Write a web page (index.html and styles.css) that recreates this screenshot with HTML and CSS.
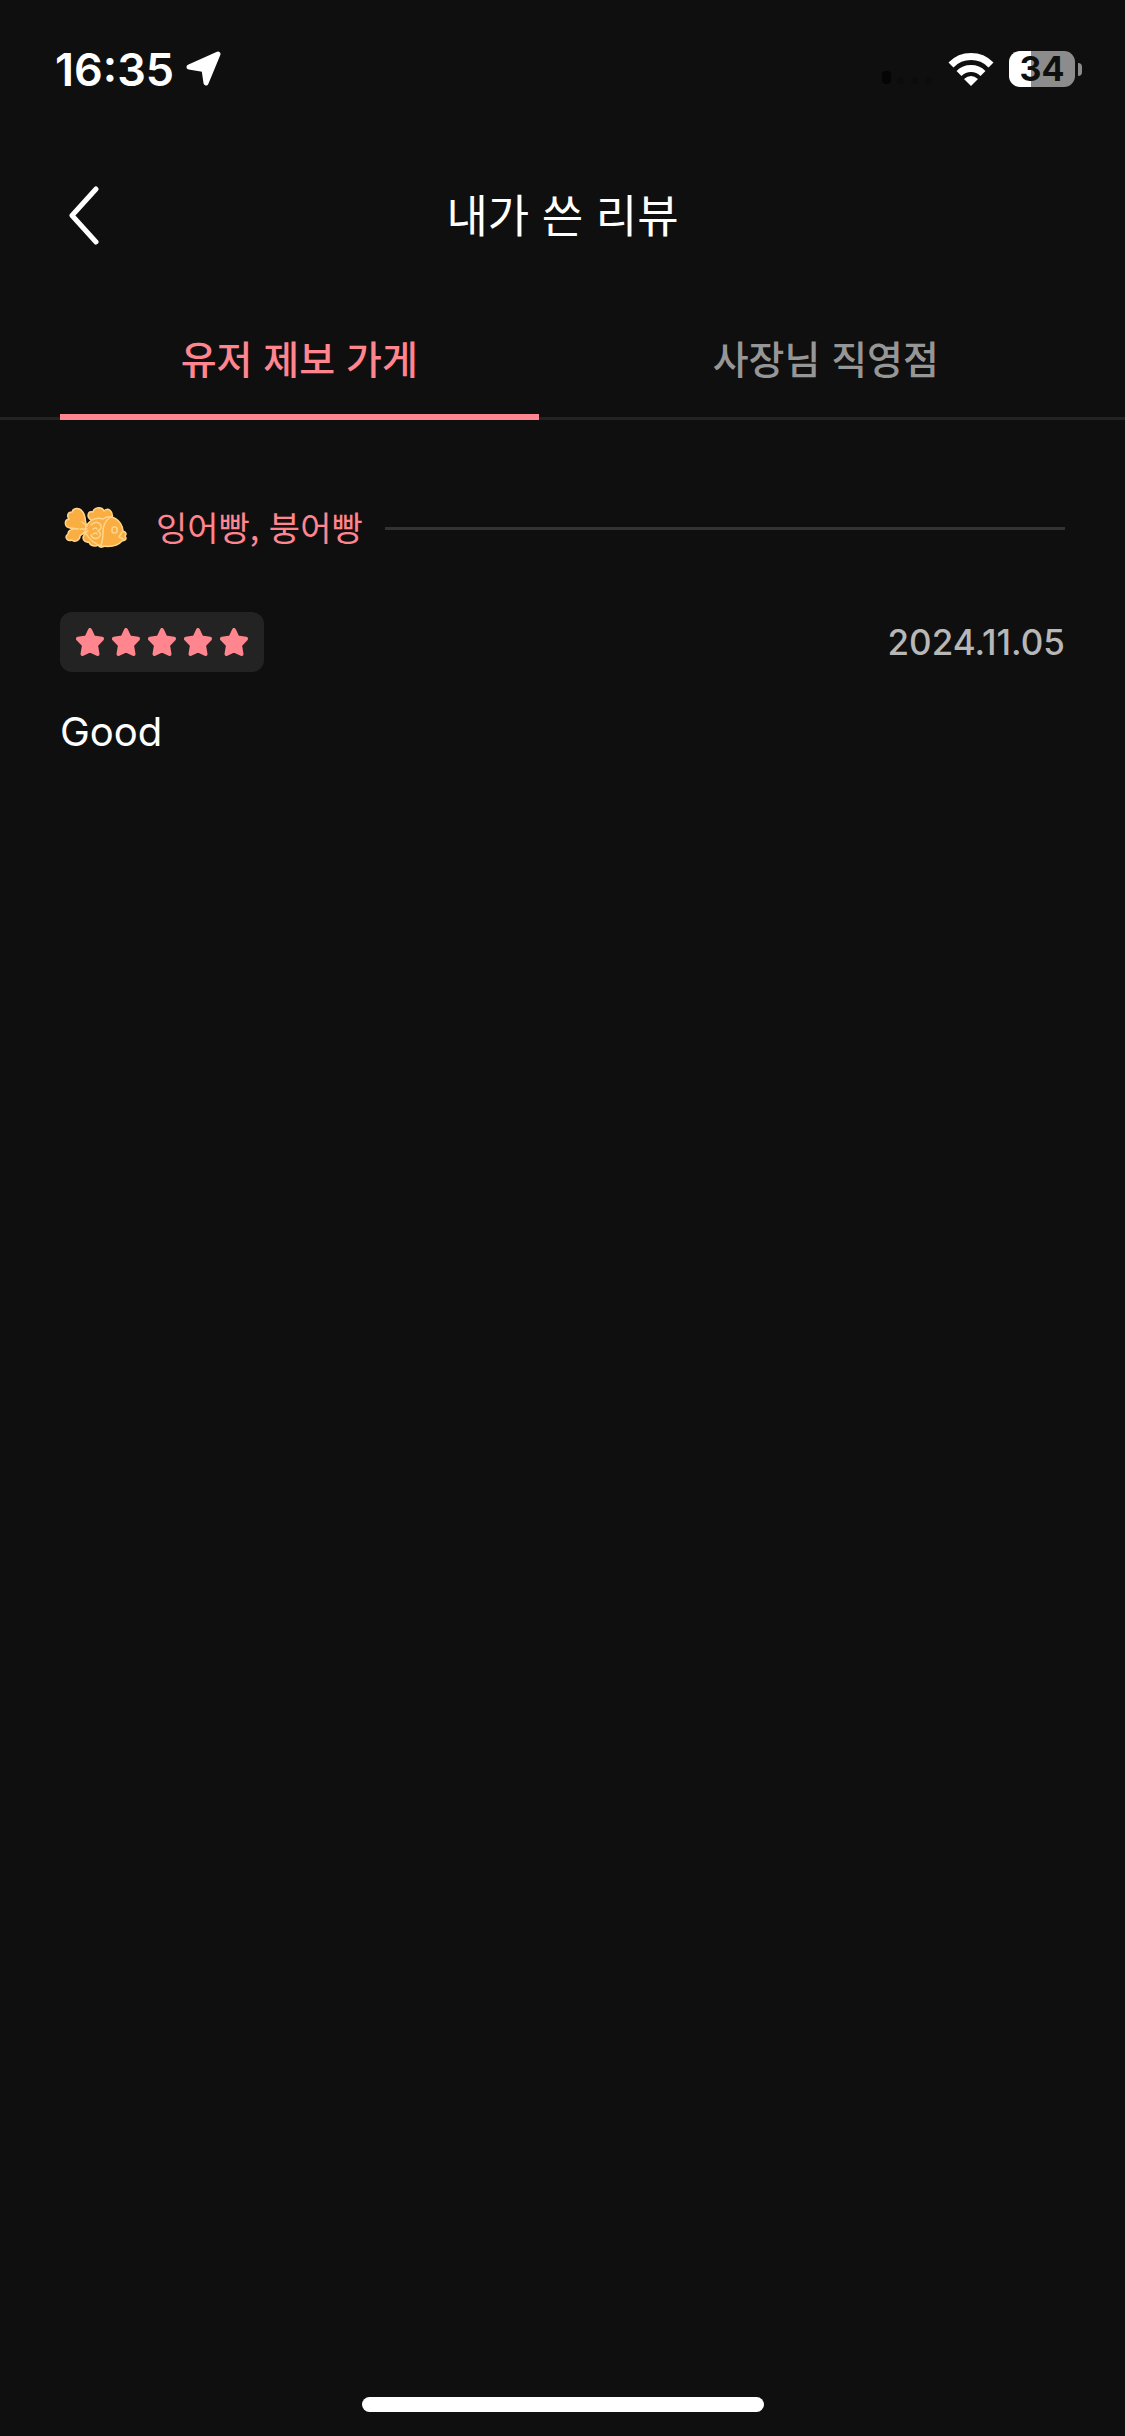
FILE: index.html
```html
<!DOCTYPE html>
<html lang="ko">
<head>
    <meta charset="UTF-8">
    <meta name="viewport" content="width=device-width, initial-scale=1.0">
    <title>내가 쓴 리뷰</title>
    <link rel="stylesheet" href="styles.css">
</head>
<body>
    <div class="status-bar">
        <div class="status-left">
            <span class="time">16:35</span>
            <svg class="location-icon" viewBox="0 0 36 36" aria-hidden="true">
                <path d="M32 3 20 32 18 18.500 3 16Z" fill="#fff" stroke="#fff" stroke-width="5" stroke-linejoin="round"/>
            </svg>
        </div>
        <div class="status-right">
            <svg class="signal-icon" viewBox="0 0 54 14" aria-hidden="true">
                <rect x="0" y="0" width="9" height="13" rx="4"/>
                <rect x="15" y="6" width="7" height="7" rx="3" opacity=".3"/>
                <rect x="29" y="6" width="7" height="7" rx="3" opacity=".3"/>
                <rect x="43" y="6" width="7" height="7" rx="3" opacity=".3"/>
            </svg>
            <svg class="wifi-icon" viewBox="0 0 46 34" aria-hidden="true">
                <g fill="none" stroke="#fff">
                    <path d="M3 13A28 28 0 0 1 43 13" stroke-width="7"/>
                    <path d="M11 21.500A17 17 0 0 1 35 21.500" stroke-width="7"/>
                </g>
                <path d="M23 34 16 27Q23 21 30 27Z" fill="#fff"/>
            </svg>
            <div class="battery">
                <span class="battery-level">34</span>
                <span class="battery-cap"></span>
            </div>
        </div>
    </div>

    <header class="nav-bar">
        <button type="button" class="back-button" aria-label="뒤로">
            <svg viewBox="0 0 36 60" aria-hidden="true">
                <path d="M30 3 6 29.500 30 56" fill="none" stroke="#fff" stroke-width="5" stroke-linecap="round" stroke-linejoin="round"/>
            </svg>
        </button>
        <h1>내가 쓴 리뷰</h1>
    </header>

    <nav class="tabs" role="tablist">
        <button type="button" class="tab active" role="tab" aria-selected="true">유저 제보 가게</button>
        <button type="button" class="tab" role="tab" aria-selected="false">사장님 직영점</button>
    </nav>

    <main class="reviews">
        <article class="review">
            <div class="category">
                <svg class="category-icon" viewBox="0 0 72 72" aria-hidden="true">
                    <g fill="#faae42" stroke="#ffd58c" stroke-width="1.500" stroke-linejoin="round" stroke-linecap="round">
                        <!-- fins -->
                        <path d="M31 28C26 25 28 18 33 20 34 15 42 14 44 19 48 15 54 19 52 27L45 31Z"/>
                        <path d="M25 42C21 46 24 51 29 50 30 54 36 55 38 53 40 57 46 55 47 50L44 44Z"/>
                        <!-- tail -->
                        <path d="M27 33C24 31 27 24 22 19 19 15 13 16 12 20 7 20 7 25 9 27 4 28 4 35 10 36 13 37 16 36 18 37 13 36 8 38 8 42 4 45 7 50 12 48 15 51 20 48 20 44 22 42 24 41 27 38Z"/>
                        <!-- body -->
                        <path d="M26 34C31 27 37 25 43 27 51 21 62 28 63 39Q68 41 65 44 68 48 62 49C57 55 49 55 42 54 34 52 29 47 25 40Z"/>
                    </g>
                    <g fill="none" stroke="#ffd58c" stroke-width="1.500" stroke-linecap="round" stroke-linejoin="round">
                        <path d="M50 25Q43 31 43 40 43 48 41 53M22 30 27 34M20 37 27 37M23 42 28 39"/>
                        <path d="M31 33Q36 28 40 32 43 36 38 39 43 42 38 46 33 48 31 43M33 37Q36 35 37 37M33 42Q36 40 37 42"/>
                        <rect x="52" y="35" width="5" height="6" rx="2"/>
                        <path d="M62 40 59 45 63 47"/>
                    </g>
                </svg>
                <h2>잉어빵, 붕어빵</h2>
                <hr>
            </div>
            <div class="review-meta">
                <div class="rating" role="img" aria-label="별점 5점">
                    <svg class="star" viewBox="0 0 28 28"><use href="#star"/></svg>
                    <svg class="star" viewBox="0 0 28 28"><use href="#star"/></svg>
                    <svg class="star" viewBox="0 0 28 28"><use href="#star"/></svg>
                    <svg class="star" viewBox="0 0 28 28"><use href="#star"/></svg>
                    <svg class="star" viewBox="0 0 28 28"><use href="#star"/></svg>
                </div>
                <time datetime="2024-11-05">2024.11.05</time>
            </div>
            <p class="review-text">Good</p>
        </article>
    </main>

    <div class="home-indicator"></div>

    <svg class="sprite" aria-hidden="true">
        <symbol id="star" viewBox="0 0 28 28">
            <path d="M14 2 17.500 9.500 26 10.800 20 17 21.500 26 14 22.500 6.500 26 8 17 2 10.800 10.500 9.500Z" fill="#ff858f" stroke="#ff858f" stroke-width="4" stroke-linejoin="round"/>
        </symbol>
    </svg>
</body>
</html>
```

FILE: styles.css
```css
* {
    box-sizing: border-box;
}
body {
    margin: 0;
    min-height: 100vh;
    display: flex;
    flex-direction: column;
    background: #0f0f0f;
    color: #fff;
    font-family: 'Inter', 'Noto Sans CJK KR', sans-serif;
}
button {
    padding: 0;
    border: none;
    background: none;
    cursor: pointer;
}
svg {
    display: block;
}

/* Status bar */
.status-bar {
    display: flex;
    justify-content: space-between;
    align-items: center;
    height: 138px;
    padding: 0 43px 0 55px;
}
.status-left,
.status-right {
    display: flex;
    align-items: center;
}
.status-left {
    gap: 12px;
}
.time {
    font-size: 45px;
    font-weight: 600;
}
.location-icon {
    width: 36px;
    height: 36px;
}
.signal-icon {
    width: 54px;
    height: 14px;
    margin: 18px 12px 0 0;
    fill: #050505;
}
.wifi-icon {
    width: 46px;
    height: 34px;
    margin-right: 15px;
}
.battery {
    display: flex;
    align-items: center;
    gap: 3px;
}
.battery-level {
    width: 66px;
    height: 36px;
    border-radius: 11px;
    background: linear-gradient(to right, #fff 34%, #8c8c8c 34%);
    color: #0f0f0f;
    font-size: 34px;
    font-weight: 700;
    line-height: 36px;
    text-align: center;
}
.battery-cap {
    width: 4px;
    height: 13px;
    border-radius: 0 4px 4px 0;
    background: #8c8c8c;
}

/* Header */
.nav-bar {
    display: grid;
    grid-template-columns: 36px 1fr 36px;
    align-items: center;
    height: 156px;
    padding: 0 66px;
}
.back-button svg {
    width: 36px;
    height: 60px;
}
h1 {
    margin: 0;
    padding-bottom: 4px;
    font-family: 'Noto Sans CJK KR', sans-serif;
    font-size: 45px;
    font-weight: 400;
    line-height: 60px;
    text-align: center;
}

/* Tabs */
.tabs {
    display: grid;
    grid-template-columns: 1fr 1fr;
    gap: 48px;
    height: 126px;
    padding: 0 60px;
    box-shadow: inset 0 -3px #232323;
}
.tab {
    border-top: 6px solid transparent;
    border-bottom: 6px solid transparent;
    color: #969696;
    font-family: 'Noto Sans CJK KR', sans-serif;
    font-size: 39px;
    font-weight: 500;
}
.tab.active {
    border-bottom-color: #ff858f;
    color: #ff858f;
}

/* Reviews */
.reviews {
    flex: 1;
    padding: 72px 60px;
}
.category {
    display: flex;
    align-items: center;
    height: 72px;
}
.category-icon {
    width: 72px;
    height: 72px;
    margin-right: 24px;
}
h2 {
    margin: 0 22px 0 0;
    padding-bottom: 4px;
    color: #ff858f;
    font-family: 'Noto Sans CJK KR', sans-serif;
    font-size: 34px;
    font-weight: 400;
}
hr {
    flex: 1;
    height: 3px;
    margin: 0;
    border: none;
    background: #333;
}
.review-meta {
    display: flex;
    justify-content: space-between;
    align-items: center;
    margin-top: 48px;
}
.rating {
    display: flex;
    gap: 8px;
    padding: 16px;
    border-radius: 12px;
    background: #232323;
}
.star {
    width: 28px;
    height: 28px;
}
time {
    color: #b7b7b7;
    font-size: 35px;
    font-weight: 500;
}
.review-text {
    margin: 30px 0 0;
    font-size: 40px;
    line-height: 60px;
}

.home-indicator {
    width: 402px;
    height: 15px;
    margin: 0 auto 24px;
    border-radius: 8px;
    background: #fff;
}
.sprite {
    display: none;
}
```
